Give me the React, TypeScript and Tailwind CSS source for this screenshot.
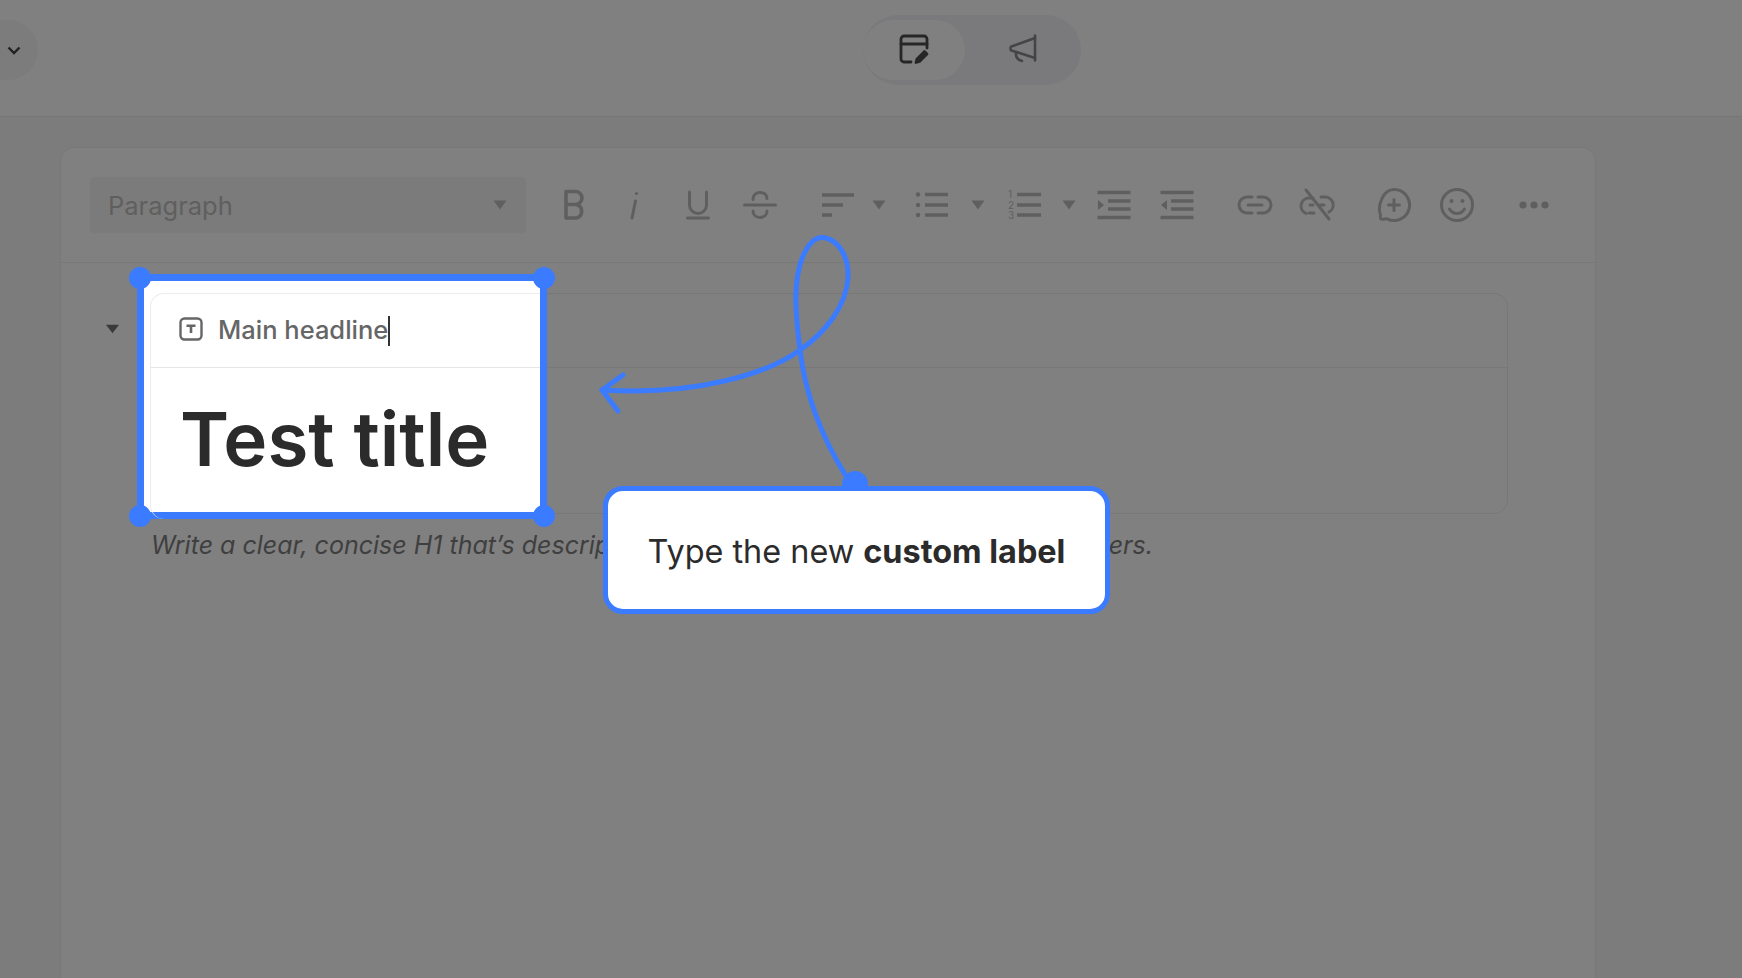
import { ReactNode } from 'react';

const blue = '#3b7bff';

function Ico({ children, className = 'ml-0' }: { children: ReactNode; className?: string }) {
  return (
    <svg
      viewBox="0 0 36 36"
      fill="none"
      stroke="#5f5f5f"
      strokeWidth={3}
      strokeLinecap="round"
      strokeLinejoin="round"
      className={`w-9 h-9 shrink-0 ${className}`}
    >
      {children}
    </svg>
  );
}

function Caret({ className }: { className: string }) {
  return (
    <svg viewBox="0 0 16 10" className={`w-4 h-[10px] shrink-0 ${className}`}>
      <path d="M1.5 0.5h13L8 9.5z" fill="#5f5f5f" />
    </svg>
  );
}

export default function App() {
  return (
    <div className="relative h-screen overflow-hidden bg-[#7c7c7d] [font-family:Inter,sans-serif]">
      {/* Top bar */}
      <header className="relative h-[117px] bg-[#808080] border-b border-[#767676] flex justify-center items-center">
        <div className="absolute left-[-30px] top-[20px] w-[68px] h-[60px] rounded-full bg-[#7c7c7c] flex items-center justify-end pr-[16px]">
          <svg viewBox="0 0 16 16" fill="none" stroke="#222" strokeWidth={2.4} className="w-4 h-4">
            <path d="M2.5 5.5 8 11l5.500-5.500" />
          </svg>
        </div>
        <div className="flex items-center w-[218px] h-[70px] rounded-full bg-[#7a7a7c] -mt-[17px] ml-[202px]">
          <div className="w-[102px] h-[60px] rounded-full bg-[#808080] flex items-center justify-center pb-[2px]">
            <svg viewBox="0 0 32 32" fill="none" stroke="#262626" strokeWidth={2.8} strokeLinecap="round" strokeLinejoin="round" className="w-8 h-8">
              <path d="M13 29H6a3 3 0 0 1-3-3V6a3 3 0 0 1 3-3h20a3 3 0 0 1 3 3v9" />
              <path d="M3 11h26" />
              <path d="M18 29.500l1-3.500 7.500-7.500 2.500 2.500-7.500 7.500z" fill="#262626" />
            </svg>
          </div>
          <div className="flex-1 flex items-center justify-center pb-[2px]">
            <svg viewBox="0 0 32 32" fill="none" stroke="#454545" strokeWidth={2.6} strokeLinecap="round" strokeLinejoin="round" className="w-8 h-8">
              <path d="M28 2.500v25" />
              <path d="M28 5 6 13a2.500 2.500 0 0 0 0 5l22 7" />
              <path d="M9 19c-.5 5 1.500 8 6 9" />
            </svg>
          </div>
        </div>
      </header>

      {/* Editor card */}
      <main className="pl-[60px] pt-[30px] w-[1596px] h-full">
        <div className="h-full bg-[#808080] border border-[#787878] rounded-t-[14px]">
          {/* Toolbar */}
          <div className="h-[115px] border-b border-[#787878] flex items-center pl-[29px]">
            <div className="w-[436px] h-[56px] rounded-[4px] bg-[#7b7b7b] flex items-center justify-between pl-[18px] pr-[18px]">
              <span className="text-[25.5px] pt-[3px] text-[#5f5f5f]">Paragraph</span>
              <Caret className="ml-0" />
            </div>
            <Ico className="ml-[30px]">
              <path strokeWidth={3.6} d="M10 5h9.500a6.500 6.500 0 0 1 0 13H10zM10 18h10.500a7 7 0 0 1 0 13.500H10z" transform="translate(0 -0.5)" />
            </Ico>
            <Ico className="ml-[24px]">
              <path d="M19.500 14 16 31" />
              <circle cx="20.500" cy="6.500" r="1.600" fill="#5f5f5f" stroke="none" />
            </Ico>
            <Ico className="ml-[28px]">
              <path d="M9.500 5v13a8.500 8.500 0 0 0 17 0V5" />
              <path d="M7.500 31h21" />
            </Ico>
            <Ico className="ml-[26px]">
              <path d="M2.500 18h31" />
              <path d="M11 12.500C11 8 14 5.500 18 5.500s7 2 7 6M11 24c0 4 3 6.500 7 6.500s7-2.500 7-6.500" />
            </Ico>
            <Ico className="ml-[42px]">
              <path d="M2 8h32M2 18h21M2 28h10" strokeWidth={3.4} strokeLinecap="butt" />
            </Ico>
            <Caret className="ml-[15px]" />
            <Ico className="ml-[27px]">
              <path d="M11 7.500h23M11 18h23M11 28h23" strokeWidth={3.4} strokeLinecap="butt" />
              <circle cx="4" cy="7.500" r="2.200" fill="#5f5f5f" stroke="none" />
              <circle cx="4" cy="18" r="2.200" fill="#5f5f5f" stroke="none" />
              <circle cx="4" cy="28" r="2.200" fill="#5f5f5f" stroke="none" />
            </Ico>
            <Caret className="ml-[20px]" />
            <Ico className="ml-[20px]">
              <path d="M11 7.500h24M11 18h24M11 28h24" strokeWidth={3.4} strokeLinecap="butt" />
              <text x="2" y="11" fontSize="10" fill="#5f5f5f" stroke="none">1</text>
              <text x="2" y="21.500" fontSize="10" fill="#5f5f5f" stroke="none">2</text>
              <text x="2" y="32" fontSize="10" fill="#5f5f5f" stroke="none">3</text>
            </Ico>
            <Caret className="ml-[19px]" />
            <Ico className="ml-[19px]">
              <path d="M1.500 5.500h33M12 14h22.500M12 22h22.500M1.500 30.500h33" strokeWidth={3.4} strokeLinecap="butt" />
              <path d="M2 13l6 5-6 5z" fill="#5f5f5f" stroke="none" />
            </Ico>
            <Ico className="ml-[27px]">
              <path d="M1.500 5.500h33M12 14h22.500M12 22h22.500M1.500 30.500h33" strokeWidth={3.4} strokeLinecap="butt" />
              <path d="M8 13l-6 5 6 5z" fill="#5f5f5f" stroke="none" />
            </Ico>
            <Ico className="ml-[42px]">
              <path d="M15 10h-5a8 8 0 0 0 0 16h5M21 10h5a8 8 0 0 1 0 16h-5M11 18h14" />
            </Ico>
            <Ico className="ml-[26px]">
              <path d="M14 11h-4a8 8 0 0 0-3 15.400M15 26h-5M22 10h4a8 8 0 0 1 4 15M11 18h3M21 18h4" />
              <path d="M7 3l23 29" />
            </Ico>
            <Ico className="ml-[41px]">
              <path d="M18 2.500a15.500 15.500 0 1 1-7 29.300c-1.500-.8-3.500 1-5.500.5-1.500-.4-1.300-2.500-1-4.500C1 19 7 2.500 18 2.500z" />
              <path d="M18 12.500v11M12.500 18h11" />
            </Ico>
            <Ico className="ml-[27px]">
              <circle cx="18" cy="18" r="15.500" />
              <circle cx="12.500" cy="14" r="2" fill="#5f5f5f" stroke="none" />
              <circle cx="23.500" cy="14" r="2" fill="#5f5f5f" stroke="none" />
              <path d="M10.500 22c2 3.200 4.500 4.500 7.500 4.500s5.500-1.300 7.500-4.500" />
            </Ico>
            <Ico className="ml-[41px]">
              <circle cx="7" cy="18" r="3.600" fill="#5f5f5f" stroke="none" />
              <circle cx="18" cy="18" r="3.600" fill="#5f5f5f" stroke="none" />
              <circle cx="29" cy="18" r="3.600" fill="#5f5f5f" stroke="none" />
            </Ico>
          </div>

          {/* Block under the spotlight */}
          <div className="flex pt-[30px] pr-[87px]">
            <div className="w-[89px] pt-[31px] flex justify-center pl-[16px] pr-[11px]">
              <svg viewBox="0 0 16 10" className="w-[15px] h-[10px] ml-[8px]">
                <path d="M1 0.500h14L8 9.500z" fill="#3a3a3a" />
              </svg>
            </div>
            <div className="flex-1 h-[221px] border border-[#787878] rounded-[14px]">
              <div className="h-[74px] border-b border-[#787878]" />
            </div>
          </div>
          <p className="pl-[90px] pt-[15px] text-[25px] leading-[32px] italic text-[#3f3f3f] whitespace-nowrap">
            Write a clear, concise H1 that’s descriptive and immediately relevant to your readers.
          </p>
        </div>
      </main>

      {/* Arrow from the callout to the field */}
      <svg className="absolute inset-0 w-full h-full pointer-events-none" viewBox="0 0 1742 978" fill="none">
        <path
          d="M846 476C826 444 806 400 800 350C795 310 793 280 803 256C810 240 818 236 826 238C840 242 849 258 848 278C846 306 826 332 800 350C770 372 700 396 602 390"
          stroke={blue}
          strokeWidth={5}
          strokeLinecap="round"
        />
        <path d="M623 375 602 390 618 411" stroke={blue} strokeWidth={5} strokeLinecap="round" strokeLinejoin="round" />
      </svg>

      {/* Highlighted label field */}
      <div className="absolute left-[137px] top-[274px] w-[410px] h-[245px] border-[7px] border-[#3b7bff] bg-white rounded-[4px]">
        <div className="ml-[6px] mt-[12px] h-[226px] border-l border-t border-[#ececec] rounded-tl-[14px] rounded-bl-[14px] flex flex-col">
          <div className="h-[74px] shrink-0 border-b border-[#e6e6e6] flex items-center pl-[28px]">
            <svg viewBox="0 0 24 24" fill="none" stroke="#666" strokeWidth={2.4} className="w-6 h-6 shrink-0 -mt-[3px]">
              <rect x="1.500" y="1.500" width="21" height="21" rx="4" />
              <path d="M7.500 7.500h9v2.600h-3.200V16h-2.600v-5.900H7.500z" fill="#666" stroke="none" />
            </svg>
            <span className="ml-[15px] text-[25.5px] font-medium text-[#666] whitespace-nowrap">Main headline</span>
            <span className="w-[1.5px] h-[30px] bg-[#333] shrink-0" />
          </div>
          <div className="flex-1 flex items-center pl-[29px] pb-[8px]">
            <h1 className="text-[74.5px] leading-none font-semibold text-[#2b2b2b] whitespace-nowrap">Test title</h1>
          </div>
        </div>
        <span className="absolute left-[-15px] top-[-14px] w-[22px] h-[22px] rounded-full bg-[#3b7bff]" />
        <span className="absolute right-[-15px] top-[-14px] w-[22px] h-[22px] rounded-full bg-[#3b7bff]" />
        <span className="absolute left-[-15px] bottom-[-15px] w-[22px] h-[22px] rounded-full bg-[#3b7bff]" />
        <span className="absolute right-[-15px] bottom-[-15px] w-[22px] h-[22px] rounded-full bg-[#3b7bff]" />
      </div>

      {/* Callout */}
      <div className="absolute left-[603px] top-[486px] w-[507px] h-[128px]">
        <span className="absolute left-[239px] top-[-15px] w-[26px] h-[26px] rounded-full bg-[#3b7bff]" />
        <div className="relative h-full bg-white border-[5px] border-[#3b7bff] rounded-[20px] flex items-center justify-center pt-[4px] text-[32.4px] text-[#2b2b2b] whitespace-nowrap">
          <span>Type the new <strong className="font-bold">custom label</strong></span>
        </div>
      </div>
    </div>
  );
}
